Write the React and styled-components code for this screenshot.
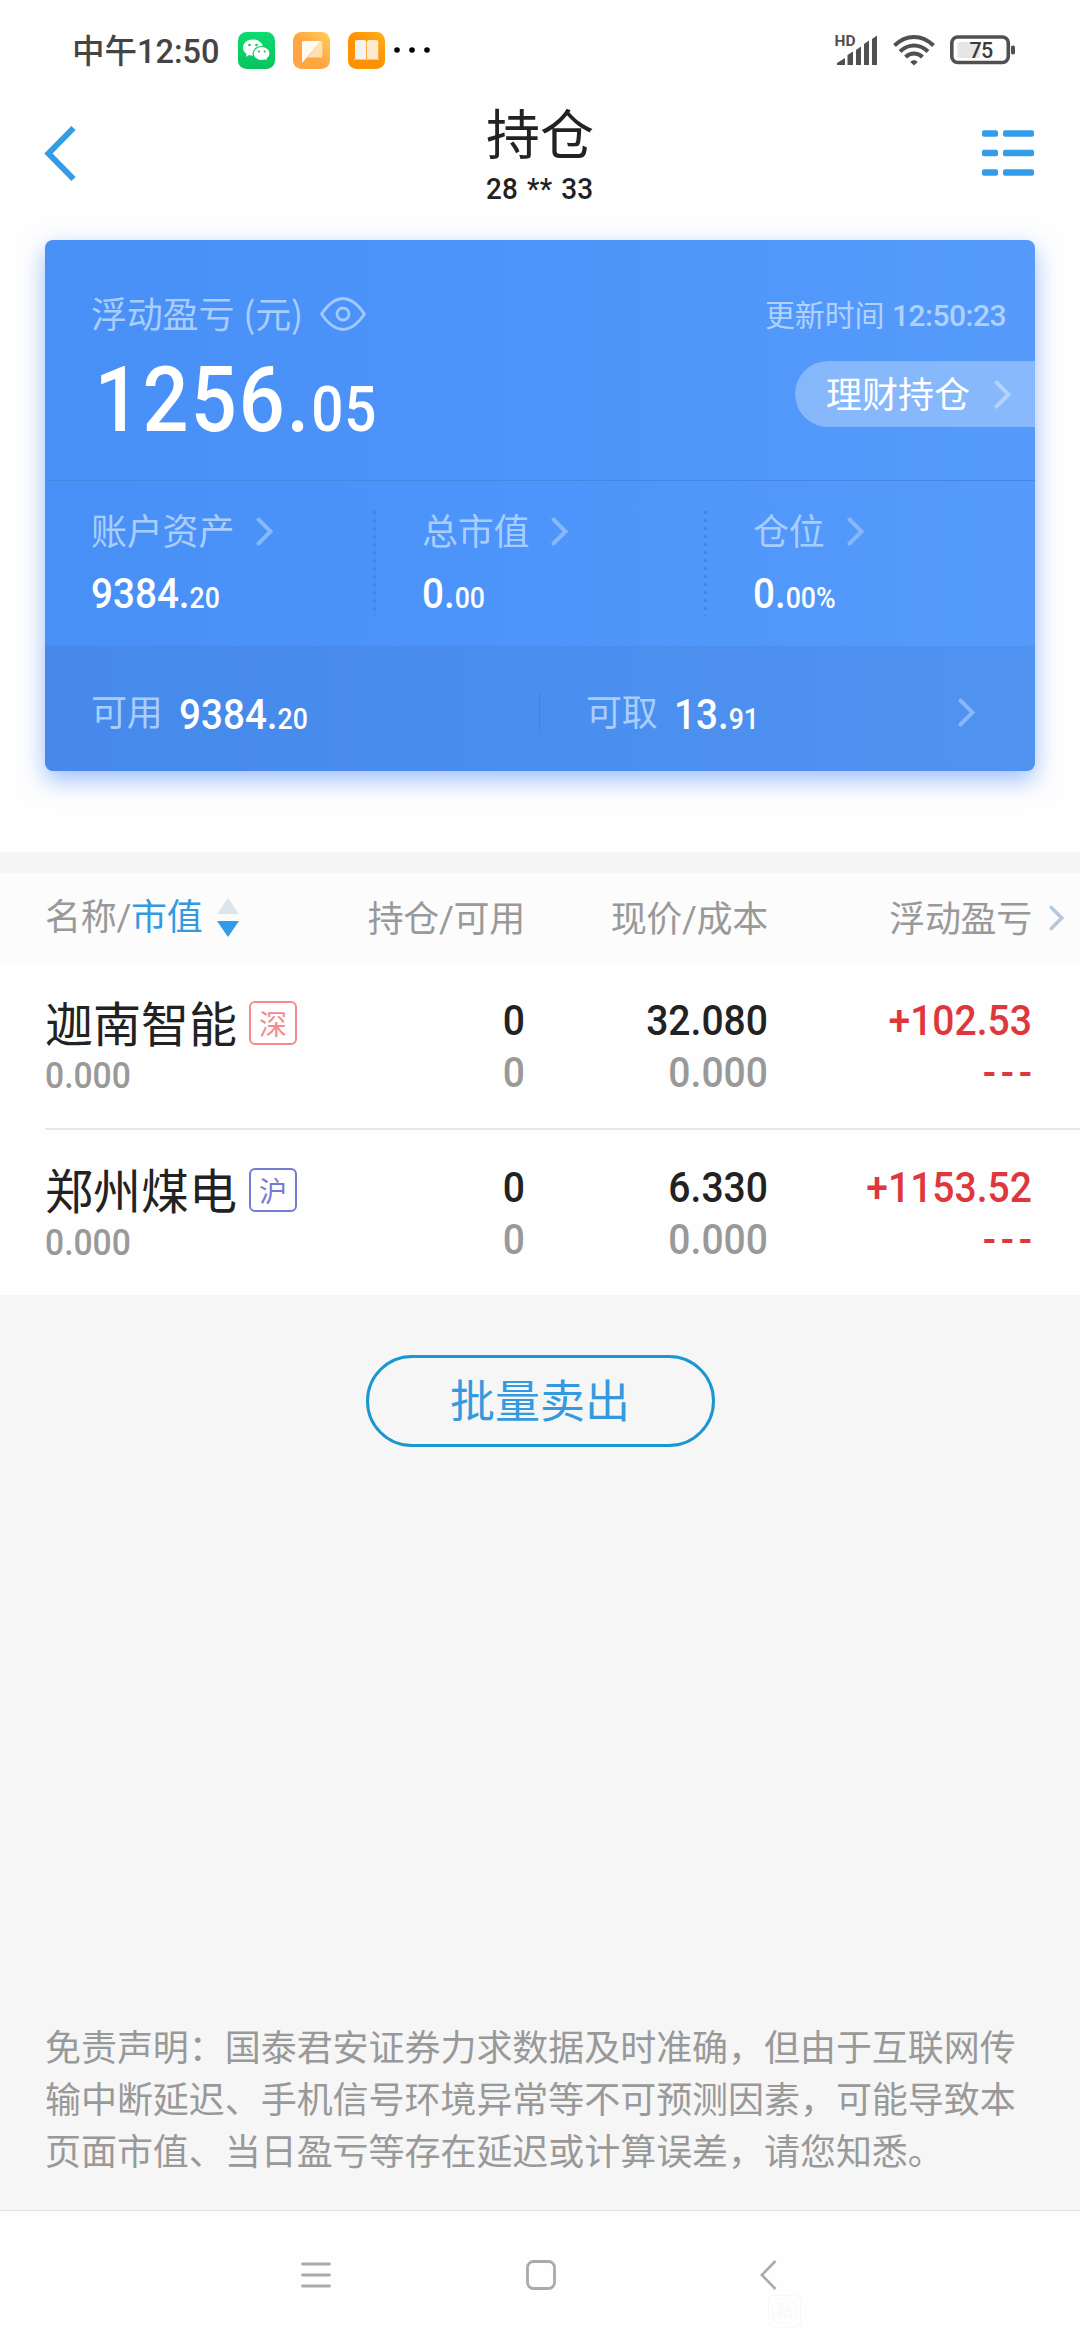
import React from 'react';
import styled, { createGlobalStyle } from 'styled-components';

const GlobalStyle = createGlobalStyle`
  * {
    box-sizing: border-box;
  }
  body {
    margin: 0;
    background: #f6f6f6;
    font-family: 'Noto Sans CJK SC', sans-serif;
  }
`;

const Page = styled.div`
  width: 1080px;
  height: 2340px;
  display: flex;
  flex-direction: column;
  overflow: hidden;
  background: #f6f6f6;
  color: #222;
`;

const Icon = styled.svg`
  display: block;
  flex: none;
  overflow: visible;
`;

/* ---------- status bar ---------- */

const StatusBar = styled.div`
  height: 100px;
  padding: 0 64px 0 72px;
  display: flex;
  align-items: center;
  justify-content: space-between;
  background: #fefefe;
`;

const StatusGroup = styled.div`
  display: flex;
  align-items: center;
  gap: ${(p) => p.$gap}px;
`;

const Clock = styled.div`
  width: 148px;
  padding-top: 3px;
  font-family: Roboto, 'Noto Sans CJK SC', sans-serif;
  font-size: 32.5px;
  font-weight: 500;
  line-height: 40px;
  white-space: nowrap;
  color: #444;
`;

const AppIcons = styled.div`
  display: flex;
  align-items: center;
  gap: 18px;
  margin: 0 9px 0 18px;
`;

/* ---------- title bar ---------- */

const TitleBar = styled.div`
  height: 140px;
  padding: 0 45px;
  display: grid;
  grid-template-columns: 60px 1fr 60px;
  background: #fefefe;
`;

const TitleSide = styled.div`
  display: flex;
  justify-content: ${(p) => (p.$end ? 'flex-end' : 'flex-start')};
  padding: ${(p) => (p.$end ? '30px 1px 0 0' : '25px 0 0 0')};
`;

const TitleText = styled.div`
  display: flex;
  flex-direction: column;
  align-items: center;
`;

const Title = styled.h1`
  margin: 0;
  padding-top: 2px;
  font-size: 54px;
  font-weight: 400;
  line-height: 60px;
`;

const Account = styled.div`
  padding-top: 7px;
  font-family: Roboto, sans-serif;
  font-size: 30px;
  font-weight: 500;
  line-height: 40px;
  letter-spacing: 0.2px;
  word-spacing: 2px;
  transform: scaleX(0.93);
`;

/* ---------- summary card ---------- */

const CardArea = styled.div`
  height: 612px;
  padding: 0 45px;
  background: #fefefe;
`;

const Card = styled.div`
  height: 531px;
  display: flex;
  flex-direction: column;
  overflow: hidden;
  border-radius: 8px;
  background: linear-gradient(90deg, #488ff6 0%, #4d95fa 50%, #569bfb 100%);
`;

const CardShadow = styled.div`
  border-radius: 8px;
  box-shadow: 0 9px 24px rgba(74, 138, 250, 0.55);
`;

const CardTop = styled.div`
  height: 241px;
  padding: 48px 0 0 46px;
  display: flex;
  justify-content: space-between;
  border-bottom: 1px solid #4786e2;
`;

const CardLabel = styled.div`
  display: flex;
  align-items: center;
  font-size: 36px;
  line-height: 48px;
  letter-spacing: -0.2px;
  color: #a9cdfd;
`;

const Unit = styled.span`
  margin: 0 17px 0 9px;
`;

/* narrow figures: Roboto squeezed a little towards the left edge */
const Money = styled.div`
  font-family: Roboto, sans-serif;
  font-size: 42px;
  font-weight: 500;
  line-height: 50px;
  white-space: nowrap;
  color: #fff;
  transform: scaleX(0.92);
  transform-origin: left center;

  small {
    font-size: 29px;
  }
`;

const Total = styled(Money)`
  padding: 15px 0 0 4px;
  font-size: 90px;
  line-height: 100px;
  letter-spacing: 2.2px;
  transform: scaleX(0.9);

  small {
    font-size: 63px;
    letter-spacing: 1px;
  }
`;

const CardTopRight = styled.div`
  display: flex;
  flex-direction: column;
  align-items: flex-end;
`;

const UpdateTime = styled.div`
  padding: 6px 29px 0 0;
  font-family: Roboto, 'Noto Sans CJK SC', sans-serif;
  font-size: 30px;
  line-height: 44px;
  letter-spacing: -0.1px;
  color: #b0d1fd;

  b {
    font-weight: 500;
    letter-spacing: -0.5px;
  }
`;

const WealthPill = styled.div`
  width: 240px;
  height: 66px;
  margin-top: 23px;
  padding: 0 24px 0 31px;
  display: flex;
  align-items: center;
  justify-content: space-between;
  border-radius: 33px 0 0 33px;
  background: rgba(255, 255, 255, 0.3);
  font-size: 36px;
  color: #fff;

  span {
    padding-bottom: 5px;
  }
`;

const CardMiddle = styled.div`
  height: 165px;
  padding-top: 26px;
  display: grid;
  grid-template-columns: repeat(3, 331px);
`;

const Metric = styled.div`
  height: 109px;
  padding-left: 46px;
  background: ${(p) =>
    p.$divided
      ? 'repeating-linear-gradient(180deg, #4385e8 0 3px, transparent 3px 8px) 328px 4px / 3px 105px no-repeat'
      : 'none'};

  ${CardLabel} {
    gap: 22px;
    height: 49px;
  }

  span {
    padding-bottom: 5px;
  }

  ${Money} {
    padding-top: 13px;
  }
`;

const CardBottom = styled.div`
  flex: 1;
  padding: 8px 60px 0 46px;
  display: flex;
  align-items: center;
  background: rgba(60, 110, 190, 0.18);
`;

const Cash = styled.div`
  width: ${(p) => p.$width}px;
  display: flex;
  align-items: center;
  gap: 16px;

  ${CardLabel} {
    padding-bottom: 5px;
  }

  ${Money} {
    padding-top: 9px;
  }
`;

const CashDivider = styled.div`
  width: 1px;
  height: 42px;
  margin-right: 46px;
  background: #4484df;
`;

const Spacer = styled.div`
  flex: 1;
`;

/* ---------- holdings table ---------- */

const Band = styled.div`
  height: 21px;
  background: #f5f5f5;
`;

const columns = `
  display: grid;
  grid-template-columns: 300px 180px 243px 264px 48px;
  padding-left: 45px;
`;

const HeadRow = styled.div`
  ${columns}
  height: 90px;
  align-items: center;
  background: #fcfcfc;
  font-family: Roboto, 'Noto Sans CJK SC', sans-serif;
  font-size: 36px;
  letter-spacing: -0.3px;
  line-height: 48px;
  color: #999;
`;

const SortCell = styled.div`
  display: flex;
  align-items: center;
  gap: 14px;

  em {
    font-style: normal;
    color: #349ae0;
  }
`;

const HeadCell = styled.div`
  padding-top: 4px;
  text-align: right;
`;

const HeadArrow = styled.div`
  padding-left: 17px;
`;

const Rows = styled.div`
  height: 332px;
  background: #fefefe;
`;

const Row = styled.div`
  ${columns}
  height: ${(p) => (p.$last ? 165 : 167)}px;
  padding: 0;
  margin-left: 45px;
  border-bottom: ${(p) => (p.$last ? 'none' : '2px solid #e8e8e8')};
`;

const NameLine = styled.div`
  height: 60px;
  margin-top: 30px;
  display: flex;
  align-items: center;
  gap: 12px;
  font-size: 48px;
  line-height: 60px;
  white-space: nowrap;

  strong {
    padding-bottom: 5px;
    font-weight: 400;
  }
`;

const Tag = styled.span`
  width: 48px;
  height: 44px;
  padding-bottom: 1px;
  display: flex;
  align-items: center;
  justify-content: center;
  border: 2px solid ${(p) => p.$color};
  border-radius: 6px;
  font-size: 28px;
  line-height: 40px;
  color: ${(p) => p.$color};
`;

const MarketValue = styled.div`
  margin-top: 1px;
  font-family: Roboto, sans-serif;
  font-size: 36px;
  font-weight: 500;
  line-height: 44px;
  color: #999;
  transform: scaleX(0.935);
  transform-origin: left center;
`;

const NumberCell = styled.div`
  padding-top: 32px;
  font-family: Roboto, sans-serif;
  font-size: 42px;
  font-weight: 500;
  line-height: 52px;
  text-align: right;
  color: ${(p) => (p.$up ? '#e0373d' : '#222')};
  transform: scaleX(0.93);
  transform-origin: right center;
`;

const SubNumber = styled.div`
  color: ${(p) => (p.$up ? '#e0373d' : '#999')};
  letter-spacing: ${(p) => (p.$up ? '5px' : 'normal')};
  margin-right: ${(p) => (p.$up ? '-5px' : '0')};
`;

/* ---------- footer ---------- */

const SellButton = styled.button`
  width: 349px;
  height: 92px;
  margin: 60px auto 0;
  padding: 0 0 4px;
  border: 3px solid #1a97d0;
  border-radius: 46px;
  background: transparent;
  font-family: inherit;
  font-size: 45px;
  line-height: 60px;
  color: #349ae0;
`;

const Disclaimer = styled.p`
  margin: auto 0 35px;
  padding: 0 45px;
  font-size: 36px;
  line-height: 52px;
  letter-spacing: -0.05px;
  color: #999;
`;

const NavBar = styled.div`
  height: 130px;
  padding: 0 303px 2px 301px;
  display: flex;
  align-items: center;
  justify-content: space-between;
  border-top: 1px solid #e2e2e2;
  background: #fefefe;
`;

const BackWrap = styled.div`
  position: relative;
  padding-left: 9px;
`;

const Stamp = styled(Icon)`
  position: absolute;
  left: 17px;
  top: 35px;
`;

const holdings = [
  {
    name: '迦南智能',
    tag: '深',
    tagColor: '#f28a8e',
    value: '0.000',
    amount: ['0', '0'],
    price: ['32.080', '0.000'],
    profit: ['+102.53', '---'],
  },
  {
    name: '郑州煤电',
    tag: '沪',
    tagColor: '#757bd0',
    value: '0.000',
    amount: ['0', '0'],
    price: ['6.330', '0.000'],
    profit: ['+1153.52', '---'],
  },
];

const metrics = [
  { label: '账户资产', whole: '9384.', part: '20' },
  { label: '总市值', whole: '0.', part: '00' },
  { label: '仓位', whole: '0.', part: '00%' },
];

const Chevron = ({ color = '#86b8fd', width = 17, height = 29 }) => (
  <Icon width={width} height={height} viewBox="0 0 17 29" fill="none">
    <path d="M2.5 2.5 14.5 14.5 2.5 26.5" stroke={color} strokeWidth="4" strokeLinecap="round" />
  </Icon>
);

const WechatIcon = () => (
  <Icon width="37" height="37" viewBox="0 0 37 37">
    <defs>
      <linearGradient id="wechat" x1="0" y1="0" x2="0" y2="1">
        <stop offset="0" stopColor="#0bdc72" />
        <stop offset="1" stopColor="#07c35c" />
      </linearGradient>
    </defs>
    <rect width="37" height="37" rx="8.5" fill="url(#wechat)" />
    <path d="M15 7.5C9.3 7.5 5 11 5 15.7c0 2.6 1.4 4.8 3.6 6.3l-.9 2.9 3.5-1.8c1.2.4 2.5.6 3.8.6 5.6 0 10-3.5 10-8s-4.4-8.2-10-8.2z" fill="#fff" />
    <path d="M23.8 14.5c-4.9 0-8.7 3.1-8.7 7s3.8 7 8.7 7c1.1 0 2.2-.2 3.1-.5l2.7 1.5-.6-2.5c1.9-1.3 3.1-3.2 3.1-5.5 0-3.9-3.5-7-8.3-7z" fill="#fff" stroke="#0acb65" strokeWidth="1.2" />
    <circle cx="11.5" cy="13" r="1.3" fill="#09cf69" />
    <circle cx="18.5" cy="13" r="1.3" fill="#09cf69" />
    <circle cx="21" cy="19.5" r="1.1" fill="#09c862" />
    <circle cx="26.7" cy="19.5" r="1.1" fill="#09c862" />
  </Icon>
);

const NoteIcon = () => (
  <Icon width="37" height="37" viewBox="0 0 37 37">
    <defs>
      <linearGradient id="note" x1="0.1" y1="0.9" x2="1" y2="0">
        <stop offset="0.4" stopColor="#ffa542" />
        <stop offset="1" stopColor="#ffcf59" />
      </linearGradient>
    </defs>
    <rect width="37" height="37" rx="8.5" fill="url(#note)" />
    <path d="M9 31V10.5Q9 9 10.5 9H28L9 31z" fill="#fffaf0" />
    <path d="M28 9q1.3 0 1.3 1.5V24q0 1.5-1.5 1.5H14L28 9z" fill="#ffe0b4" />
  </Icon>
);

const BookIcon = () => (
  <Icon width="37" height="37" viewBox="0 0 37 37">
    <defs>
      <linearGradient id="book" x1="0" y1="1" x2="1" y2="0">
        <stop offset="0.5" stopColor="#ff9200" />
        <stop offset="1" stopColor="#ffb01f" />
      </linearGradient>
    </defs>
    <rect width="37" height="37" rx="8.5" fill="url(#book)" />
    <path d="M6 26h25v2H6z" fill="#ffc477" />
    <rect x="7" y="8" width="11.3" height="19" rx="2" fill="#f3f3f3" />
    <rect x="19" y="8" width="11.3" height="19" rx="2" fill="#ffeacb" />
  </Icon>
);

const MoreDots = () => (
  <Icon width="36" height="8" viewBox="0 0 36 8" fill="#000">
    <circle cx="3" cy="4" r="2.8" />
    <circle cx="18" cy="4" r="2.8" />
    <circle cx="33" cy="4" r="2.8" />
  </Icon>
);

const SignalIcon = () => (
  <Icon width="43" height="32" viewBox="0 0 43 32" fill="#505050">
    <text x="-0.5" y="12" fontFamily="Roboto, sans-serif" fontSize="15.5" fontWeight="700">HD</text>
    <path d="M2 31v-2l8-5v7z" />
    <path d="M12.5 31V21l5.5-3.5V31z" />
    <path d="M21 31V16l5-3.5V31z" />
    <path d="M29 31V10l5-3.5V31z" />
    <path d="M37 31V5l5-3.5V31z" />
  </Icon>
);

const WifiIcon = () => (
  <Icon width="42" height="31" viewBox="0 0 42 31" fill="none" stroke="#505050" strokeWidth="4">
    <path d="M1.5 10.5C13-1 29-1 40.5 10.5" />
    <path d="M7 16.5c8.5-8 19.5-8 28 0" />
    <path d="M12.5 22c5-4.8 12-4.8 17 0" />
    <path d="M17.3 27c2-2.3 5.4-2.3 7.4 0L21 30.5z" fill="#505050" stroke="none" />
  </Icon>
);

const BatteryIcon = () => (
  <Icon width="66" height="30" viewBox="0 0 66 30">
    <rect x="1.8" y="2" width="56.5" height="25.5" rx="6" fill="none" stroke="#505050" strokeWidth="3.6" />
    <path d="M10 7h20v16H10a2.5 2.5 0 0 1-2.5-2.5v-11A2.5 2.5 0 0 1 10 7z" fill="#e6e6e6" />
    <rect x="61" y="10.5" width="4" height="9" rx="1.8" fill="#505050" />
    <text x="31" y="22.5" textAnchor="middle" fontFamily="Roboto, sans-serif" fontSize="21.5" fontWeight="500" letterSpacing="-0.8" fill="#3c3c3c">75</text>
  </Icon>
);

const EyeIcon = () => (
  <Icon width="46" height="34" viewBox="0 -2 46 34" fill="none" stroke="#a2c8fd" strokeWidth="2.8">
    <path d="M1.5 17C8 7.500 15 1.500 23 1.500S38 7.500 44.500 17C38 26.500 31 32.500 23 32.500S8 26.500 1.500 17z" strokeLinejoin="round" />
    <circle cx="23" cy="17" r="6" />
  </Icon>
);

const SortIcon = () => (
  <Icon width="24" height="40" viewBox="0 0 24 40">
    <path d="M12 0 23 16H1z" fill="#dde4ec" />
    <path d="M12 39 23 23H1z" fill="#329ce8" />
  </Icon>
);

const App = () => (
  <Page>
    <GlobalStyle />
    <StatusBar>
      <StatusGroup $gap={0}>
        <Clock>中午12:50</Clock>
        <AppIcons>
          <WechatIcon />
          <NoteIcon />
          <BookIcon />
        </AppIcons>
        <MoreDots />
      </StatusGroup>
      <StatusGroup $gap={15}>
        <SignalIcon />
        <WifiIcon />
        <BatteryIcon />
      </StatusGroup>
    </StatusBar>

    <TitleBar>
      <TitleSide>
        <Icon width="32" height="56" viewBox="0 0 32 56" fill="none">
          <path d="M28.5 3 3.5 28.5 28.5 54" stroke="#329ce8" strokeWidth="6" />
        </Icon>
      </TitleSide>
      <TitleText>
        <Title>持仓</Title>
        <Account>28 ** 33</Account>
      </TitleText>
      <TitleSide $end>
        <Icon width="52" height="46" viewBox="0 0 52 46" fill="#329ce8">
          {[0.3, 19.8, 39.3].map((y) => (
            <React.Fragment key={y}>
              <rect x="0" y={y} width="16" height="6.4" rx="2" />
              <rect x="21" y={y} width="31" height="6.4" rx="2" />
            </React.Fragment>
          ))}
        </Icon>
      </TitleSide>
    </TitleBar>

    <CardArea>
      <CardShadow>
        <Card>
          <CardTop>
            <div>
              <CardLabel>
                浮动盈亏<Unit>(元)</Unit>
                <EyeIcon />
              </CardLabel>
              <Total>
                1256.<small>05</small>
              </Total>
            </div>
            <CardTopRight>
              <UpdateTime>
                更新时间 <b>12:50:23</b>
              </UpdateTime>
              <WealthPill>
                <span>理财持仓</span>
                <Chevron color="#b4d2fe" />
              </WealthPill>
            </CardTopRight>
          </CardTop>
          <CardMiddle>
            {metrics.map((item, index) => (
              <Metric key={item.label} $divided={index < 2}>
                <CardLabel>
                  <span>{item.label}</span>
                  <Chevron />
                </CardLabel>
                <Money>
                  {item.whole}<small>{item.part}</small>
                </Money>
              </Metric>
            ))}
          </CardMiddle>
          <CardBottom>
            <Cash $width={448}>
              <CardLabel>可用</CardLabel>
              <Money>
                9384.<small>20</small>
              </Money>
            </Cash>
            <CashDivider />
            <Cash $width={300}>
              <CardLabel>可取</CardLabel>
              <Money>
                13.<small>91</small>
              </Money>
            </Cash>
            <Spacer />
            <Chevron />
          </CardBottom>
        </Card>
      </CardShadow>
    </CardArea>

    <Band />
    <HeadRow>
      <SortCell>
        <span>名称/<em>市值</em></span>
        <SortIcon />
      </SortCell>
      <HeadCell>持仓/可用</HeadCell>
      <HeadCell>现价/成本</HeadCell>
      <HeadCell>浮动盈亏</HeadCell>
      <HeadArrow>
        <Chevron color="#b5c9da" width={15} height={26} />
      </HeadArrow>
    </HeadRow>
    <Rows>
      {holdings.map((item, index) => (
        <Row key={item.name} $last={index === holdings.length - 1}>
          <div>
            <NameLine>
              <strong>{item.name}</strong>
              <Tag $color={item.tagColor}>{item.tag}</Tag>
            </NameLine>
            <MarketValue>{item.value}</MarketValue>
          </div>
          <NumberCell>
            {item.amount[0]}
            <SubNumber>{item.amount[1]}</SubNumber>
          </NumberCell>
          <NumberCell>
            {item.price[0]}
            <SubNumber>{item.price[1]}</SubNumber>
          </NumberCell>
          <NumberCell $up>
            {item.profit[0]}
            <SubNumber $up>{item.profit[1]}</SubNumber>
          </NumberCell>
        </Row>
      ))}
    </Rows>

    <SellButton>批量卖出</SellButton>
    <Disclaimer>
      免责声明：国泰君安证券力求数据及时准确，但由于互联网传输中断延迟、手机信号环境异常等不可预测因素，可能导致本页面市值、当日盈亏等存在延迟或计算误差，请您知悉。
    </Disclaimer>

    <NavBar>
      <Icon width="30" height="26" viewBox="0 0 30 26" stroke="#aaa" strokeWidth="2.8" strokeLinecap="round">
        <path d="M1.5 2h27M1.5 13h27M1.5 24h27" />
      </Icon>
      <Icon width="30" height="30" viewBox="0 0 30 30" fill="none">
        <rect x="1.5" y="1.5" width="27" height="27" rx="6" stroke="#aaa" strokeWidth="2.8" />
      </Icon>
      <BackWrap>
        <Icon width="17" height="30" viewBox="0 0 17 30" fill="none">
          <path d="M15.5 1 1.8 15 15.5 29" stroke="#aaa" strokeWidth="2.6" />
        </Icon>
        <Stamp width="33" height="33" viewBox="0 0 33 33" fill="none" stroke="#f8f8f8">
          <rect x="0.5" y="0.5" width="32" height="32" rx="5" />
          <path d="M20 28l-4 3-3-3C7 27 4 22 4 16 4 8 9 4 16.5 4S29 8 29 16c0 6-3 11-9 12z" />
          <text x="16.5" y="21" textAnchor="middle" fontSize="16" fill="#f8f8f8" stroke="none">贴</text>
        </Stamp>
      </BackWrap>
    </NavBar>
  </Page>
);

export default App;
